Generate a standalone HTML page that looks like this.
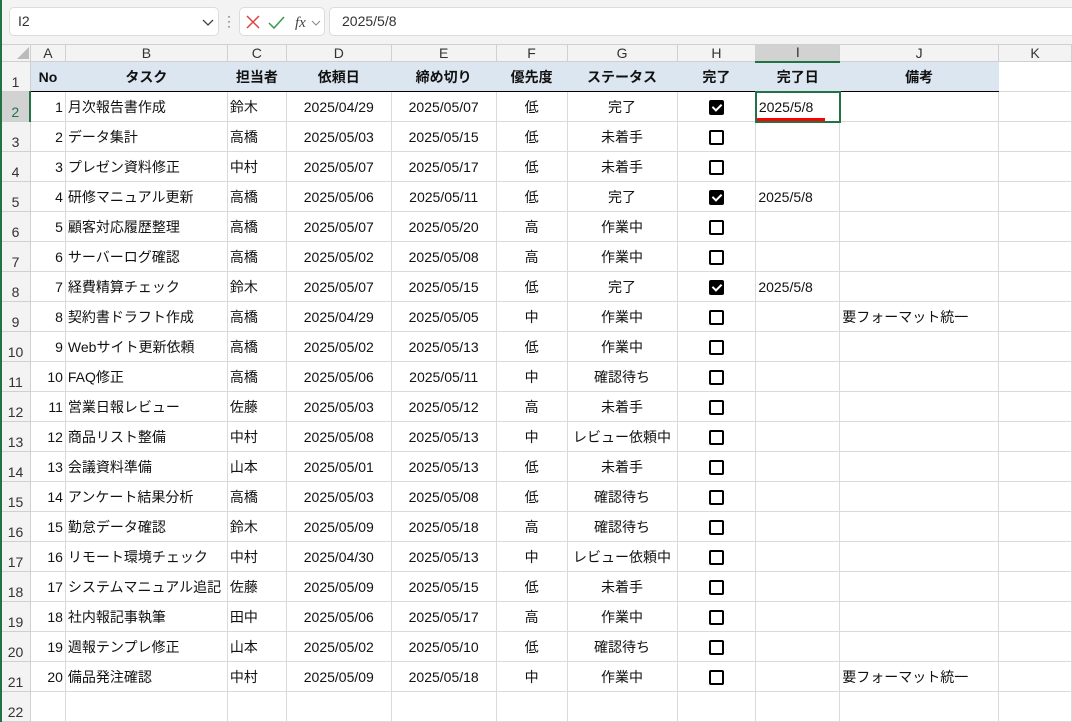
<!DOCTYPE html>
<html><head><meta charset="utf-8"><style>
*{box-sizing:border-box;margin:0;padding:0}
body{width:1072px;height:722px;overflow:hidden;background:#fff;font-family:"Liberation Sans","Noto Sans CJK JP",sans-serif;font-size:14px;color:#111;position:relative}
#top{position:absolute;left:0;top:0;width:1072px;height:44px;background:#f3f3f3}
.box{position:absolute;top:7px;height:29px;background:#fff;border:1px solid #dcdcdc;border-radius:5px}
#grid{position:absolute;left:0;top:44px;border-collapse:collapse;table-layout:fixed}
#grid td{border:1px solid #dadada;height:30px;padding:0 2px;white-space:nowrap;overflow:hidden}
#grid tr.ch td{height:17px;background:#f3f3f3;text-align:center;color:#333;font-size:14px;padding:0;border-color:#d0d0d0;line-height:15px}
#grid td.rh{background:#f3f3f3;text-align:center;vertical-align:bottom;padding:0 0 1px;color:#333;border-color:#d0d0d0}
#grid tr.h td:not(.rh):not(.k){background:#dce6f1;font-weight:bold;text-align:center;border-color:#dce6f1;border-bottom:1.5px solid #000}
.r{text-align:right}.c{text-align:center}
.cb{display:inline-block;width:15px;height:15px;border:2px solid #000;border-radius:2px;vertical-align:middle}
.cb.on{background:#000;position:relative}
.cb.on:after{content:"";position:absolute;left:3px;top:0px;width:4px;height:7px;border:solid #fff;border-width:0 2px 2px 0;transform:rotate(45deg)}
</style></head><body>
<div id="top">
<div style="position:absolute;left:0;top:0;width:2px;height:44px;background:#217346"></div>
<div class="box" style="left:9px;width:210px"><span style="position:absolute;left:8px;top:5px;color:#333">I2</span><svg style="position:absolute;left:192px;top:9px" width="12" height="10"><path d="M1 3 L6 8 L11 3" stroke="#444" stroke-width="1.3" fill="none"/></svg></div>
<div style="position:absolute;left:227px;top:14px;width:3px;height:14px;font-size:12px;color:#444;line-height:5px">·<br>·<br>·</div>
<div class="box" style="left:239px;width:86px"><svg style="position:absolute;left:5px;top:6px" width="80" height="18"><path d="M2 2 L14 14 M14 2 L2 14" stroke="#e04040" stroke-width="1.5"/><path d="M24 9 L29 14 L39 3" stroke="#3a9a4a" stroke-width="1.5" fill="none"/><text x="50" y="13" font-family="Liberation Serif" font-style="italic" font-size="15" fill="#444">fx</text><path d="M67 7 L71 11 L75 7" stroke="#888" fill="none"/></svg></div>
<div class="box" style="left:329px;width:760px"><span style="position:absolute;left:12px;top:5px;color:#333">2025/5/8</span></div>
</div>
<table id="grid">
<colgroup><col style="width:30px"><col style="width:35px"><col style="width:162px"><col style="width:59px"><col style="width:105px"><col style="width:105px"><col style="width:71px"><col style="width:110px"><col style="width:79px"><col style="width:84px"><col style="width:159px"><col style="width:73px"></colgroup>
<tr class="ch"><td><svg width="12" height="12" style="position:relative;left:8px;top:1px"><path d="M12 0 L12 12 L0 12Z" fill="#bbb"/></svg></td><td>A</td><td>B</td><td>C</td><td>D</td><td>E</td><td>F</td><td>G</td><td>H</td><td style="background:#d2d2d2;border-bottom:2px solid #217346">I</td><td>J</td><td>K</td></tr>
<tr class="h"><td class="rh">1</td><td>No</td><td>タスク</td><td>担当者</td><td>依頼日</td><td>締め切り</td><td>優先度</td><td>ステータス</td><td>完了</td><td>完了日</td><td>備考</td><td class="k"></td></tr>
<tr><td class="rh" style="background:#d2d2d2;color:#217346;border-right:2px solid #217346">2</td><td class="r">1</td><td>月次報告書作成</td><td>鈴木</td><td class="c">2025/04/29</td><td class="c">2025/05/07</td><td class="c">低</td><td class="c">完了</td><td class="c"><span class="cb on"></span></td><td style="border:2px solid #217346;position:relative">2025/5/8<div style="position:absolute;left:-6px;bottom:0;width:74px;height:3px;background:#f00"></div></td><td></td><td></td></tr>
<tr><td class="rh">3</td><td class="r">2</td><td>データ集計</td><td>高橋</td><td class="c">2025/05/03</td><td class="c">2025/05/15</td><td class="c">低</td><td class="c">未着手</td><td class="c"><span class="cb"></span></td><td></td><td></td><td></td></tr>
<tr><td class="rh">4</td><td class="r">3</td><td>プレゼン資料修正</td><td>中村</td><td class="c">2025/05/07</td><td class="c">2025/05/17</td><td class="c">低</td><td class="c">未着手</td><td class="c"><span class="cb"></span></td><td></td><td></td><td></td></tr>
<tr><td class="rh">5</td><td class="r">4</td><td>研修マニュアル更新</td><td>高橋</td><td class="c">2025/05/06</td><td class="c">2025/05/11</td><td class="c">低</td><td class="c">完了</td><td class="c"><span class="cb on"></span></td><td>2025/5/8</td><td></td><td></td></tr>
<tr><td class="rh">6</td><td class="r">5</td><td>顧客対応履歴整理</td><td>高橋</td><td class="c">2025/05/07</td><td class="c">2025/05/20</td><td class="c">高</td><td class="c">作業中</td><td class="c"><span class="cb"></span></td><td></td><td></td><td></td></tr>
<tr><td class="rh">7</td><td class="r">6</td><td>サーバーログ確認</td><td>高橋</td><td class="c">2025/05/02</td><td class="c">2025/05/08</td><td class="c">高</td><td class="c">作業中</td><td class="c"><span class="cb"></span></td><td></td><td></td><td></td></tr>
<tr><td class="rh">8</td><td class="r">7</td><td>経費精算チェック</td><td>鈴木</td><td class="c">2025/05/07</td><td class="c">2025/05/15</td><td class="c">低</td><td class="c">完了</td><td class="c"><span class="cb on"></span></td><td>2025/5/8</td><td></td><td></td></tr>
<tr><td class="rh">9</td><td class="r">8</td><td>契約書ドラフト作成</td><td>高橋</td><td class="c">2025/04/29</td><td class="c">2025/05/05</td><td class="c">中</td><td class="c">作業中</td><td class="c"><span class="cb"></span></td><td></td><td>要フォーマット統一</td><td></td></tr>
<tr><td class="rh">10</td><td class="r">9</td><td>Webサイト更新依頼</td><td>高橋</td><td class="c">2025/05/02</td><td class="c">2025/05/13</td><td class="c">低</td><td class="c">作業中</td><td class="c"><span class="cb"></span></td><td></td><td></td><td></td></tr>
<tr><td class="rh">11</td><td class="r">10</td><td>FAQ修正</td><td>高橋</td><td class="c">2025/05/06</td><td class="c">2025/05/11</td><td class="c">中</td><td class="c">確認待ち</td><td class="c"><span class="cb"></span></td><td></td><td></td><td></td></tr>
<tr><td class="rh">12</td><td class="r">11</td><td>営業日報レビュー</td><td>佐藤</td><td class="c">2025/05/03</td><td class="c">2025/05/12</td><td class="c">高</td><td class="c">未着手</td><td class="c"><span class="cb"></span></td><td></td><td></td><td></td></tr>
<tr><td class="rh">13</td><td class="r">12</td><td>商品リスト整備</td><td>中村</td><td class="c">2025/05/08</td><td class="c">2025/05/13</td><td class="c">中</td><td class="c">レビュー依頼中</td><td class="c"><span class="cb"></span></td><td></td><td></td><td></td></tr>
<tr><td class="rh">14</td><td class="r">13</td><td>会議資料準備</td><td>山本</td><td class="c">2025/05/01</td><td class="c">2025/05/13</td><td class="c">低</td><td class="c">未着手</td><td class="c"><span class="cb"></span></td><td></td><td></td><td></td></tr>
<tr><td class="rh">15</td><td class="r">14</td><td>アンケート結果分析</td><td>高橋</td><td class="c">2025/05/03</td><td class="c">2025/05/08</td><td class="c">低</td><td class="c">確認待ち</td><td class="c"><span class="cb"></span></td><td></td><td></td><td></td></tr>
<tr><td class="rh">16</td><td class="r">15</td><td>勤怠データ確認</td><td>鈴木</td><td class="c">2025/05/09</td><td class="c">2025/05/18</td><td class="c">高</td><td class="c">確認待ち</td><td class="c"><span class="cb"></span></td><td></td><td></td><td></td></tr>
<tr><td class="rh">17</td><td class="r">16</td><td>リモート環境チェック</td><td>中村</td><td class="c">2025/04/30</td><td class="c">2025/05/13</td><td class="c">中</td><td class="c">レビュー依頼中</td><td class="c"><span class="cb"></span></td><td></td><td></td><td></td></tr>
<tr><td class="rh">18</td><td class="r">17</td><td>システムマニュアル追記</td><td>佐藤</td><td class="c">2025/05/09</td><td class="c">2025/05/15</td><td class="c">低</td><td class="c">未着手</td><td class="c"><span class="cb"></span></td><td></td><td></td><td></td></tr>
<tr><td class="rh">19</td><td class="r">18</td><td>社内報記事執筆</td><td>田中</td><td class="c">2025/05/06</td><td class="c">2025/05/17</td><td class="c">高</td><td class="c">作業中</td><td class="c"><span class="cb"></span></td><td></td><td></td><td></td></tr>
<tr><td class="rh">20</td><td class="r">19</td><td>週報テンプレ修正</td><td>山本</td><td class="c">2025/05/02</td><td class="c">2025/05/10</td><td class="c">低</td><td class="c">確認待ち</td><td class="c"><span class="cb"></span></td><td></td><td></td><td></td></tr>
<tr><td class="rh">21</td><td class="r">20</td><td>備品発注確認</td><td>中村</td><td class="c">2025/05/09</td><td class="c">2025/05/18</td><td class="c">中</td><td class="c">作業中</td><td class="c"><span class="cb"></span></td><td></td><td>要フォーマット統一</td><td></td></tr>
<tr><td class="rh">22</td><td></td><td></td><td></td><td></td><td></td><td></td><td></td><td></td><td></td><td></td><td></td></tr>
</table>
<div style="position:absolute;left:0;top:44px;width:2px;height:678px;background:#217346"></div>
</body></html>
